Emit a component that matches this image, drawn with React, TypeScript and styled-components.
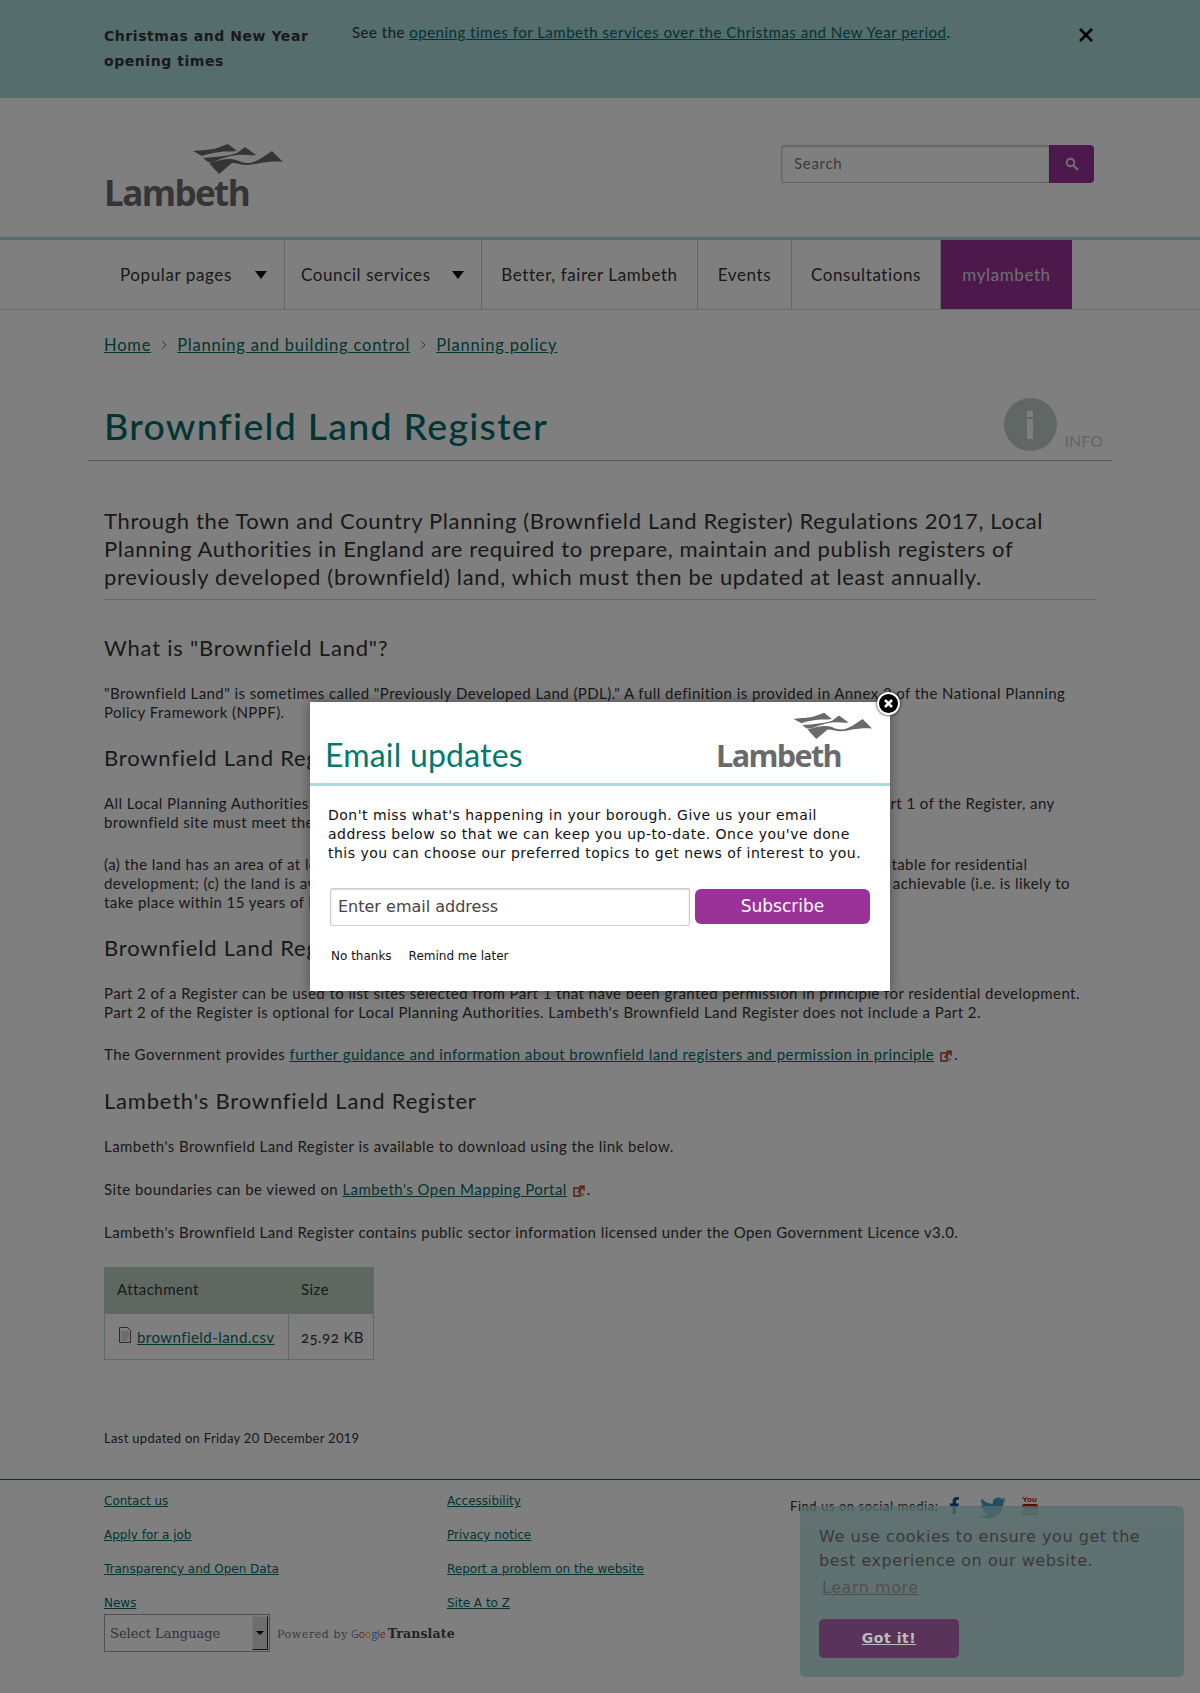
import React from 'react'
import styled, { createGlobalStyle } from 'styled-components'
import { FaFacebookF, FaTwitter } from 'react-icons/fa'

const body = `Lato, "Open Sans", sans-serif`
const deja = `"DejaVu Sans", sans-serif`
const serif = `"DejaVu Serif", serif`

const colors = {
  teal: '#acdadc',
  link: '#006b66',
  heading: '#006b66',
  purple: '#9b3299',
  text: '#333333',
  sage: '#bccfc0',
}

const GlobalStyle = createGlobalStyle`
  html, body { margin: 0; padding: 0; background: #fff; }
  body { font-family: ${body}; color: ${colors.text}; }
  * { box-sizing: border-box; }
`

const Page = styled.div`
  position: relative;
  height: 1693px;
  overflow: hidden;
`

const Wrap = styled.div`
  width: 992px;
  margin: 0 auto;
`

const Link = styled.a`
  color: ${colors.link};
  text-decoration: underline;
`

/* top banner */
const Banner = styled.div`
  height: 98px;
  background: ${colors.teal};
  padding-top: 24px;
`

const BannerRow = styled(Wrap)`
  display: flex;
  align-items: flex-start;
`

const BannerTitle = styled.div`
  width: 248px;
  font: bold 14px/25px ${deja};
  letter-spacing: 0.55px;
  color: #333;
`

const BannerText = styled.div`
  flex: 1;
  font-size: 15px;
  line-height: 18px;
  letter-spacing: 0.5px;
  margin-top: -1px;
`

const BannerClose = styled.svg`
  margin: 4px 2px 0 0;
  flex: none;
`

/* logo */
const LogoBox = styled.div<{ $w: number }>`
  width: ${(p) => p.$w}px;
  display: flex;
  flex-direction: column;
  align-items: flex-start;
`

const LogoWord = styled.span<{ $size: number; $color: string }>`
  font: 700 ${(p) => p.$size}px/1 'Open Sans', sans-serif;
  letter-spacing: -1.6px;
  color: ${(p) => p.$color};
`

function Logo({ width, color }: { width: number; color: string }) {
  return (
    <LogoBox $w={width}>
      <svg width={width} height={(width * 32) / 180} viewBox="0 0 180 32" style={{ display: 'block' }}>
        <g fill={color}>
          <path d="M89 8 C98 7 107 7 113 5 L124 1 L133 8 C126 9 120 8 116 9 C109 10 103 11 98 13 Z" />
          <path d="M99 15 C112 14 124 13 133 10 L141 4 L152 12 C146 13 140 11 133 12 C124 13 116 16 109 19 L104 19 Z" />
          <path d="M105 20 C112 18 119 16 126 16 C133 16 137 20 143 20 C148 20 152 18 156 16 L168 8 L179 19 C172 18 163 19 156 20 C151 21 147 22 143 22 C137 22 133 20 128 20 L115 31 Z" />
        </g>
      </svg>
      <LogoWord $size={(width / 180) * 35} $color={color}>Lambeth</LogoWord>
    </LogoBox>
  )
}

/* header */
const Header = styled.header`
  height: 139px;
`

const HeaderRow = styled(Wrap)`
  display: flex;
  justify-content: space-between;
  align-items: flex-start;
  padding-top: 45px;
`

const SearchForm = styled.div`
  display: flex;
  width: 313px;
  height: 38px;
  margin-top: 2px;
  margin-right: 2px;
`

const SearchInput = styled.div`
  flex: 1;
  border: 1px solid #c4c4c4;
  border-right: 0;
  border-radius: 4px 0 0 4px;
  box-shadow: inset 0 1px 2px rgba(0, 0, 0, 0.2);
  padding-left: 12px;
  font-size: 15px;
  line-height: 35px;
  color: #777;
  letter-spacing: 0.7px;
`

const SearchButton = styled.div`
  width: 45px;
  background: ${colors.purple};
  border-radius: 0 4px 4px 0;
  display: flex;
  align-items: center;
  justify-content: center;
`

/* nav */
const Nav = styled.nav`
  height: 73px;
  border-top: 3px solid ${colors.teal};
  border-bottom: 1px solid #d4d4d4;
`

const NavRow = styled(Wrap)`
  display: flex;
  height: 69px;
`

const NavItem = styled.div<{ $w: number; $active?: boolean }>`
  width: ${(p) => p.$w}px;
  display: flex;
  align-items: center;
  justify-content: center;
  font-size: 17px;
  letter-spacing: 0.6px;
  border-right: ${(p) => (p.$active ? '0' : '1px solid #ccc')};
  background: ${(p) => (p.$active ? colors.purple : 'transparent')};
  color: ${(p) => (p.$active ? '#ddd' : colors.text)};
`

const NavDrop = styled(NavItem)`
  justify-content: space-between;
  padding: 0 17px 0 16px;
`

const Caret = styled.span`
  width: 0;
  height: 0;
  border-left: 6px solid transparent;
  border-right: 6px solid transparent;
  border-top: 8px solid #111;
`

/* breadcrumb */
const Crumbs = styled.div`
  display: flex;
  align-items: center;
  height: 36px;
  margin-top: 17px;
  font-size: 16.5px;
  letter-spacing: 0.8px;
`

const CrumbSep = styled.svg`
  margin: 0 9px;
`

/* title */
const TitleRow = styled.div`
  display: flex;
  justify-content: space-between;
  align-items: flex-start;
  width: 1024px;
  margin: 17px -16px 0;
  padding: 18px 9px 0 16px;
  height: 81px;
  border-bottom: 1px solid #aaa;
`

const Title = styled.h1`
  margin: 6px 0 0;
  font-size: 37.5px;
  line-height: 44px;
  font-weight: 500;
  letter-spacing: 1.25px;
  color: ${colors.heading};
`

const InfoBadge = styled.div`
  display: flex;
  align-items: flex-end;
  gap: 8px;
`

const InfoCircle = styled.div`
  width: 53px;
  height: 53px;
  border-radius: 50%;
  background: #c0cfc8;
  display: flex;
  align-items: center;
  justify-content: center;
`

const InfoLabel = styled.span`
  font-size: 16px;
  line-height: 20px;
  color: #c0cfc8;
`

const Intro = styled.p`
  margin: 46px 0 0;
  padding-bottom: 8px;
  font-size: 22px;
  line-height: 28px;
  letter-spacing: 0.65px;
  border-bottom: 1px solid #ccc;
`

const H2 = styled.h2<{ $top: number }>`
  margin: ${(p) => p.$top}px 0 0;
  font-size: 22px;
  line-height: 26px;
  font-weight: 400;
  letter-spacing: 0.8px;
`

const Para = styled.p<{ $top?: number }>`
  margin: ${(p) => p.$top ?? 23}px 0 0;
  font-size: 15px;
  line-height: 19px;
  letter-spacing: 0.44px;
`

const ExtIcon = styled.svg`
  margin: 0 2px 0 6px;
  vertical-align: -2px;
`

/* attachments */
const Table = styled.table`
  margin-top: 25px;
  border-collapse: collapse;
  table-layout: fixed;
  width: 269px;
  font-size: 15px;
  letter-spacing: 0.45px;
`

const Th = styled.th<{ $w: number; $last?: boolean }>`
  width: ${(p) => p.$w}px;
  height: 46px;
  padding: 0 12px 3px;
  background: ${colors.sage};
  border: 1px solid ${colors.sage};
  border-left-color: ${(p) => (p.$last ? '#fff' : colors.sage)};
  font-weight: 400;
  text-align: left;
`

const Td = styled.td<{ $first?: boolean }>`
  height: 46px;
  padding: 0 0 0 ${(p) => (p.$first ? 14 : 12)}px;
  border: 1px solid #c0d0c4;
  white-space: nowrap;
  font-variant-numeric: oldstyle-nums;
`

const FileIcon = styled.svg`
  margin-right: 6px;
  vertical-align: 0;
`

const Updated = styled.p`
  margin: 69px 0 0;
  font-size: 13px;
  line-height: 18px;
  letter-spacing: 0.3px;
`

/* footer */
const Footer = styled.footer`
  margin-top: 32px;
  border-top: 1px solid ${colors.link};
`

const FooterRow = styled(Wrap)`
  display: grid;
  grid-template-columns: 343px 343px 1fr;
  padding-top: 14px;
`

const FooterLinks = styled.div`
  display: flex;
  flex-direction: column;
  gap: 20px;
  font: 12px/14px ${deja};
`

const Social = styled.div`
  display: flex;
  align-items: flex-start;
  padding-top: 3px;
  font-size: 13px;
  line-height: 18px;
  letter-spacing: 0.55px;
`

const SocialIcons = styled.div`
  display: flex;
  align-items: flex-start;
  margin: 0 0 0 7px;
`

const YouTube = styled.div`
  width: 16px;
  margin: -2px 0 0 16px;
  text-align: center;
  font: bold 8px/9px "Liberation Sans", sans-serif;
  letter-spacing: 0;
  color: #c4150f;
`

const YouTubeBox = styled.div`
  height: 11px;
  border-radius: 2px;
  border-top: 3px solid #c4150f;
  background: #999;
  color: #eee;
  font: bold 7px/8px "Liberation Sans", sans-serif;
`

const LanguageRow = styled(Wrap)`
  display: flex;
  align-items: center;
  margin-top: 4px;
  font-family: ${serif};
`

const LangSelect = styled.div`
  width: 166px;
  height: 38px;
  border: 1px solid #a0a0a0;
  display: flex;
  align-items: center;
  justify-content: space-between;
  padding-left: 5px;
  font-size: 13px;
  color: #666;
`

const LangArrow = styled.div`
  width: 16px;
  height: 34px;
  margin-right: 1px;
  background: #ddd;
  border: 1px solid;
  border-color: #eee #222 #222 #eee;
  display: flex;
  align-items: center;
  justify-content: center;
  &::after {
    content: '';
    border-left: 4px solid transparent;
    border-right: 4px solid transparent;
    border-top: 4px solid #000;
  }
`

const Powered = styled.span`
  margin-left: 7px;
  font-size: 11px;
  letter-spacing: 0.6px;
  color: #777;
`

const Google = styled.span`
  margin-left: 3px;
  font: 10.5px "Open Sans", sans-serif;
  letter-spacing: 0;
`

const GoogleLetter = styled.span<{ $c: string }>`
  color: ${(p) => p.$c};
`

const Translate = styled.b`
  margin-left: 2px;
  font-size: 12.5px;
  letter-spacing: 0.15px;
  color: #444;
`

/* overlay + cookie notice + modal */
const Overlay = styled.div`
  position: absolute;
  inset: 0;
  background: rgba(0, 0, 0, 0.5);
`

const Cookie = styled.div`
  position: absolute;
  right: 16px;
  bottom: 16px;
  width: 384px;
  height: 171px;
  padding: 19px 19px 0;
  background: #566d6e;
  border-radius: 5px;
  opacity: 0.75;
  font: 16px/24px ${deja};
  letter-spacing: 0.55px;
  color: #222;
`

const CookieLink = styled.a`
  display: block;
  margin: 3px 0 0 3px;
  color: #404040;
  text-decoration: underline;
`

const CookieButton = styled.div`
  width: 140px;
  height: 39px;
  margin-top: 19px;
  background: #4e1a4e;
  border-radius: 5px;
  font: bold 14px/39px ${deja};
  text-align: center;
  text-decoration: underline;
  color: #cfcfcf;
`

const Modal = styled.div`
  position: absolute;
  left: 310px;
  top: 702px;
  width: 580px;
  height: 289px;
  background: #fff;
  box-shadow: 0 0 12px rgba(0, 0, 0, 0.4);
`

const ModalHeader = styled.div`
  height: 84px;
  border-bottom: 3px solid ${colors.teal};
  display: flex;
  justify-content: space-between;
  padding: 10px 17px 0 15px;
`

const ModalTitle = styled.h3`
  margin: 24px 0 0;
  font-size: 32px;
  line-height: 38px;
  font-weight: 400;
  letter-spacing: 0.2px;
  color: #007a6e;
`

const ModalText = styled.p`
  margin: 20px 0 0 18px;
  font: 14px/19px ${deja};
  letter-spacing: 0.48px;
  color: #111;
  white-space: nowrap;
`

const ModalForm = styled.div`
  display: flex;
  gap: 5px;
  margin: 25px 0 0 20px;
  align-items: flex-start;
`

const EmailInput = styled.div`
  width: 360px;
  height: 38px;
  border: 1px solid #ccc;
  border-radius: 2px;
  box-shadow: inset 0 1px 2px rgba(0, 0, 0, 0.15);
  padding-left: 7px;
  font: 16px/36px ${deja};
  color: #444;
`

const SubscribeButton = styled.div`
  width: 175px;
  height: 35px;
  margin-top: 1px;
  background: ${colors.purple};
  border-radius: 6px;
  font: 17px/35px ${deja};
  text-align: center;
  color: #fff;
`

const ModalLinks = styled.div`
  display: flex;
  gap: 17px;
  margin: 23px 0 0 21px;
  font: 12px/14px ${deja};
  color: #111;
`

const CloseButton = styled.div`
  position: absolute;
  right: -10px;
  top: -10px;
  width: 23px;
  height: 23px;
  border-radius: 50%;
  background: #000;
  border: 2px solid #fff;
  box-shadow: 0 0 3px #000;
  display: flex;
  align-items: center;
  justify-content: center;
`

function External() {
  return (
    <ExtIcon width="12" height="12" viewBox="0 0 12 12">
      <path d="M1 3h6v8H1z" fill="none" stroke="#b03a20" strokeWidth="1.4" />
      <path d="M4.5 7.5L10 2M6.5 1.2H11v4.5" fill="none" stroke="#b03a20" strokeWidth="1.5" />
      <path d="M8 8h3v3H8z" fill="#bbb" />
    </ExtIcon>
  )
}

function Chevron() {
  return (
    <CrumbSep width="8" height="12" viewBox="0 0 8 12">
      <path d="M2 2l4 4-4 4" fill="none" stroke="#666" strokeWidth="1" />
    </CrumbSep>
  )
}

const footerLeft = ['Contact us', 'Apply for a job', 'Transparency and Open Data', 'News']
const footerMid = ['Accessibility', 'Privacy notice', 'Report a problem on the website', 'Site A to Z']

export default function App() {
  return (
    <Page>
      <GlobalStyle />
      <Banner>
        <BannerRow>
          <BannerTitle>
            Christmas and New Year
            <br />
            opening times
          </BannerTitle>
          <BannerText>
            See the <Link href="#">opening times for Lambeth services over the Christmas and New Year period</Link>.
          </BannerText>
          <BannerClose width="16" height="14" viewBox="0 0 16 14">
            <path d="M2 1l12 12M14 1L2 13" stroke="#000" strokeWidth="2.6" />
          </BannerClose>
        </BannerRow>
      </Banner>

      <Header>
        <HeaderRow>
          <Logo width={180} color="#6a6a6a" />
          <SearchForm>
            <SearchInput>Search</SearchInput>
            <SearchButton>
              <svg width="14" height="14" viewBox="0 0 14 14">
                <circle cx="5.5" cy="5.5" r="3.8" fill="none" stroke="#ddd" strokeWidth="2" />
                <path d="M8.5 8.5l4.5 4.5" stroke="#ddd" strokeWidth="2.4" />
              </svg>
            </SearchButton>
          </SearchForm>
        </HeaderRow>
      </Header>

      <Nav>
        <NavRow>
          <NavDrop $w={181}>Popular pages<Caret /></NavDrop>
          <NavDrop $w={197}>Council services<Caret /></NavDrop>
          <NavItem $w={216}>Better, fairer Lambeth</NavItem>
          <NavItem $w={94}>Events</NavItem>
          <NavItem $w={149}>Consultations</NavItem>
          <NavItem $w={131} $active>mylambeth</NavItem>
        </NavRow>
      </Nav>

      <Wrap>
        <Crumbs>
          <Link href="#">Home</Link>
          <Chevron />
          <Link href="#">Planning and building control</Link>
          <Chevron />
          <Link href="#">Planning policy</Link>
        </Crumbs>

        <TitleRow>
          <Title>Brownfield Land Register</Title>
          <InfoBadge>
            <InfoCircle>
              <svg width="6" height="28" viewBox="0 0 6 28">
                <path d="M0 0h6v6H0zM0 8h6v20H0z" fill="#fff" />
              </svg>
            </InfoCircle>
            <InfoLabel>INFO</InfoLabel>
          </InfoBadge>
        </TitleRow>

        <Intro>
          Through the Town and Country Planning (Brownfield Land Register) Regulations 2017, Local
          <br />
          Planning Authorities in England are required to prepare, maintain and publish registers of
          <br />
          previously developed (brownfield) land, which must then be updated at least annually.
        </Intro>

        <H2 $top={35}>What is "Brownfield Land"?</H2>
        <Para $top={23}>
          "Brownfield Land" is sometimes called "Previously Developed Land (PDL)." A full definition is provided in Annex 2 of the National Planning
          <br />
          Policy Framework (NPPF).
        </Para>

        <H2 $top={23}>Brownfield Land Register Part 1</H2>
        <Para $top={23}>
          All Local Planning Authorities are required to prepare and keep a register of brownfield land. To be included in Part 1 of the Register, any
          <br />
          brownfield site must meet the following criteria:
        </Para>
        <Para>
          (a) the land has an area of at least 0.25 hectares or is capable of supporting at least 5 dwellings; (b) the land is suitable for residential
          <br />
          development; (c) the land is available immediately for residential development; and (d) residential development is achievable (i.e. is likely to
          <br />
          take place within 15 years of being entered on the Register).
        </Para>

        <H2 $top={23}>Brownfield Land Register Part 2</H2>
        <Para $top={23}>
          Part 2 of a Register can be used to list sites selected from Part 1 that have been granted permission in principle for residential development.
          <br />
          Part 2 of the Register is optional for Local Planning Authorities. Lambeth's Brownfield Land Register does not include a Part 2.
        </Para>
        <Para>
          The Government provides <Link href="#">further guidance and information about brownfield land registers and permission in principle</Link>
          <External />.
        </Para>

        <H2 $top={24}>Lambeth's Brownfield Land Register</H2>
        <Para $top={23}>Lambeth's Brownfield Land Register is available to download using the link below.</Para>
        <Para $top={24}>
          Site boundaries can be viewed on <Link href="#">Lambeth's Open Mapping Portal</Link>
          <External />.
        </Para>
        <Para $top={24}>
          Lambeth's Brownfield Land Register contains public sector information licensed under the Open Government Licence v3.0.
        </Para>

        <Table>
          <thead>
            <tr>
              <Th $w={184}>Attachment</Th>
              <Th $w={85} $last>Size</Th>
            </tr>
          </thead>
          <tbody>
            <tr>
              <Td $first>
                <FileIcon width="12" height="16" viewBox="0 0 12 16">
                  <path d="M.5.5h8l3 3v12H.5z" fill="none" stroke="#555" />
                  <path d="M2 5h8M2 7h8M2 9h8M2 11h8M2 13h6" stroke="#bbb" />
                </FileIcon>
                <Link href="#">brownfield-land.csv</Link>
              </Td>
              <Td>25.92 KB</Td>
            </tr>
          </tbody>
        </Table>

        <Updated>Last updated on Friday 20 December 2019</Updated>
      </Wrap>

      <Footer>
        <FooterRow>
          <FooterLinks>
            {footerLeft.map((label) => (
              <Link href="#" key={label}>{label}</Link>
            ))}
          </FooterLinks>
          <FooterLinks>
            {footerMid.map((label) => (
              <Link href="#" key={label}>{label}</Link>
            ))}
          </FooterLinks>
          <Social>
            Find us on social media:
            <SocialIcons>
              <FaFacebookF size={17} color="#14508c" />
              <FaTwitter size={26} color="#4a9bc8" style={{ marginLeft: 17, marginTop: -2 }} />
              <YouTube>
                You
                <YouTubeBox>Tube</YouTubeBox>
              </YouTube>
            </SocialIcons>
          </Social>
        </FooterRow>
        <LanguageRow>
          <LangSelect>
            Select Language
            <LangArrow />
          </LangSelect>
          <Powered>
            Powered by
            <Google>
              <GoogleLetter $c="#4285f4">G</GoogleLetter>
              <GoogleLetter $c="#ea4335">o</GoogleLetter>
              <GoogleLetter $c="#fbbc05">o</GoogleLetter>
              <GoogleLetter $c="#4285f4">g</GoogleLetter>
              <GoogleLetter $c="#34a853">l</GoogleLetter>
              <GoogleLetter $c="#ea4335">e</GoogleLetter>
            </Google>
            <Translate>Translate</Translate>
          </Powered>
        </LanguageRow>
      </Footer>

      <Overlay />

      <Cookie>
        We use cookies to ensure you get the best experience on our website.
        <CookieLink href="#">Learn more</CookieLink>
        <CookieButton>Got it!</CookieButton>
      </Cookie>

      <Modal>
        <ModalHeader>
          <ModalTitle>Email updates</ModalTitle>
          <Logo width={157} color="#6a6a6a" />
        </ModalHeader>
        <ModalText>
          Don't miss what's happening in your borough. Give us your email
          <br />
          address below so that we can keep you up-to-date. Once you've done
          <br />
          this you can choose our preferred topics to get news of interest to you.
        </ModalText>
        <ModalForm>
          <EmailInput>Enter email address</EmailInput>
          <SubscribeButton>Subscribe</SubscribeButton>
        </ModalForm>
        <ModalLinks>
          <span>No thanks</span>
          <span>Remind me later</span>
        </ModalLinks>
        <CloseButton>
          <svg width="11" height="11" viewBox="0 0 11 11">
            <path d="M2 2l7 7M9 2l-7 7" stroke="#fff" strokeWidth="2.6" />
          </svg>
        </CloseButton>
      </Modal>
    </Page>
  )
}
